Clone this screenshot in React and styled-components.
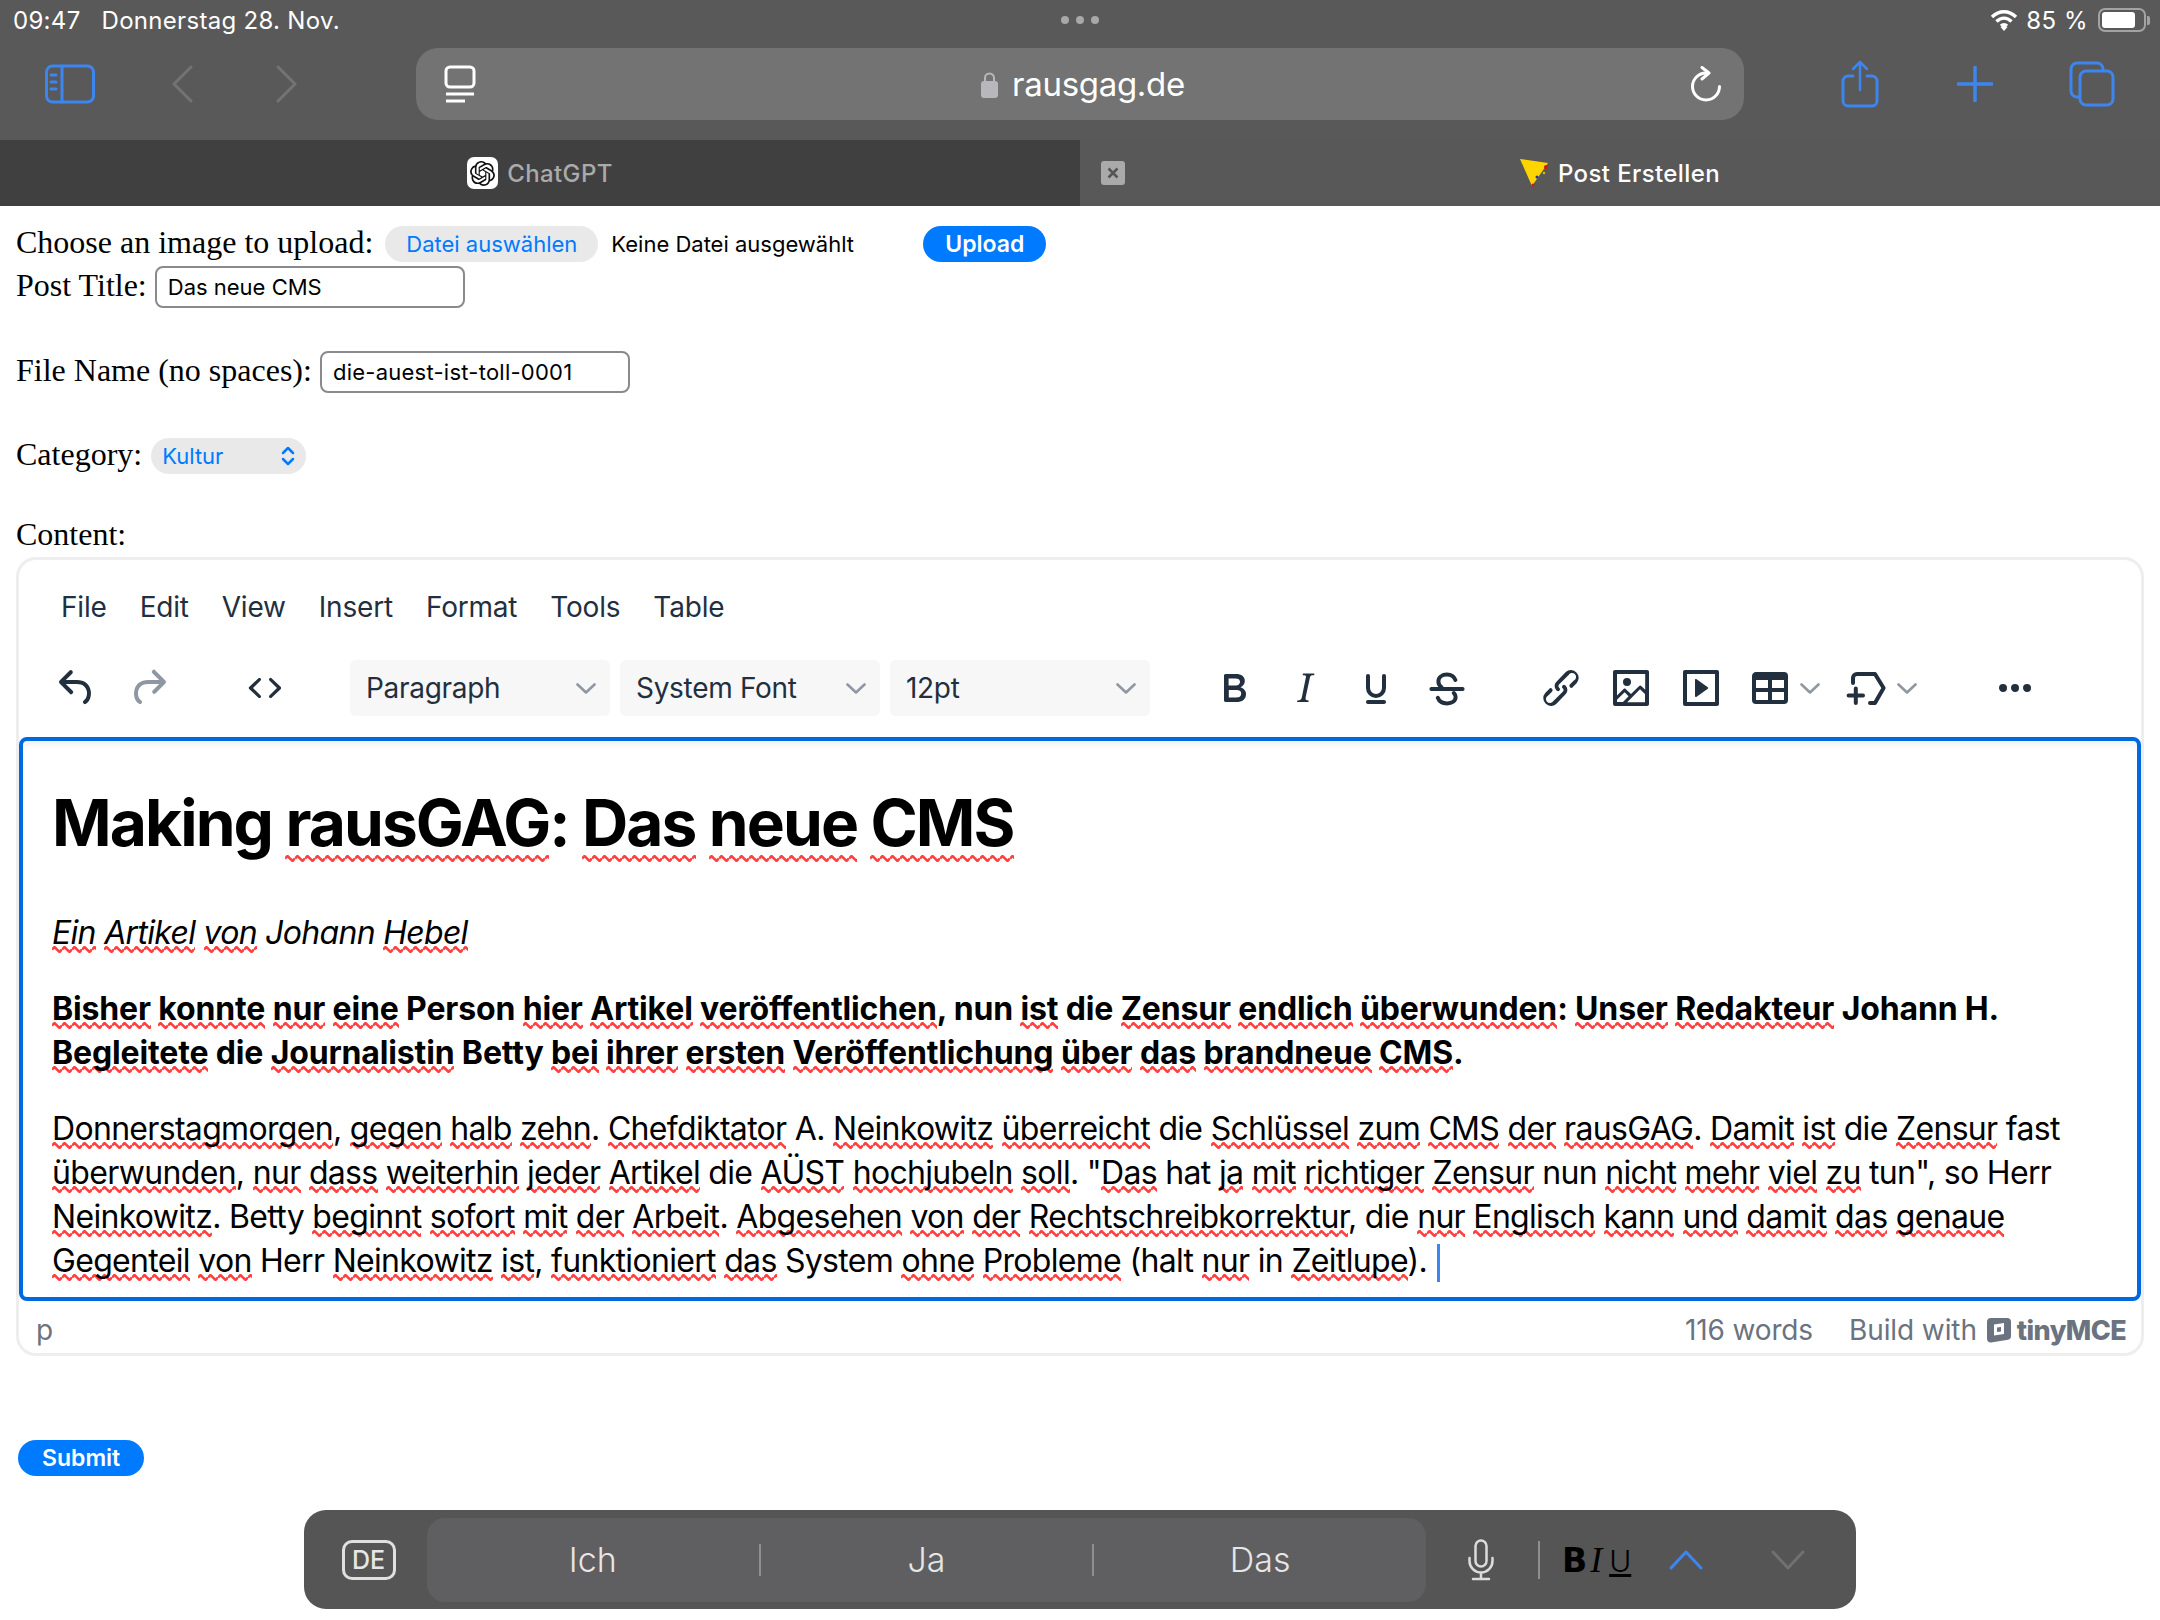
import React from "react";
import styled, { createGlobalStyle } from "styled-components";
import { SiOpenai } from "react-icons/si";

const Global = createGlobalStyle`
  html, body { margin: 0; padding: 0; background: #fff; }
  body { width: 2160px; height: 1620px; overflow: hidden; font-family: Inter, "Liberation Sans", sans-serif; }
`;

const Page = styled.div`width: 2160px; height: 1620px; display: flex; flex-direction: column;`;
const Chrome = styled.header`background: #595959; color: #fff;`;
const StatusBar = styled.div`
  height: 40px; display: grid; grid-template-columns: 1fr auto 1fr; align-items: center;
  padding: 0 10px 0 13px; font-size: 24px; font-weight: 400; color: #fff;
`;
const StatusLeft = styled.div`display: flex; gap: 21px; letter-spacing: .3px;`;
const Dots = styled.div`display: flex; gap: 7px; margin-right: 4px;`;
const Dot = styled.i`width: 8px; height: 8px; border-radius: 50%; background: #a8a8a8; display: block;`;
const StatusRight = styled.div`display: flex; align-items: center; justify-content: flex-end; gap: 8px; letter-spacing: .5px;`;
const Battery = styled.div`
  width: 48px; height: 24px; box-sizing: border-box; border: 2px solid #a3a3a3; border-radius: 7px;
  padding: 2px; margin-left: 2px; display: flex;
`;
const BatteryFill = styled.div`width: 82%; background: #fff; border-radius: 3px;`;
const BatteryCap = styled.i`display: block; width: 3px; height: 9px; background: #a3a3a3; border-radius: 0 2px 2px 0; margin-left: -7px;`;
const NavBar = styled.div`height: 100px; box-sizing: border-box; display: flex; align-items: flex-start; padding-top: 8px;`;
const NavIcon = styled.svg`display: block; flex: none; fill: none; stroke: ${p => p.$c || "#3d86f0"}; stroke-linecap: round; stroke-linejoin: round;`;
const NavLeft = styled.div`width: 416px; height: 72px; display: flex; align-items: center; padding-left: 45px; box-sizing: border-box;`;
const UrlBar = styled.div`
  width: 1328px; height: 72px; background: #737373; border-radius: 22px; display: grid;
  grid-template-columns: 1fr auto 1fr; align-items: center; padding: 0 22px 0 28px; box-sizing: border-box;
`;
const UrlText = styled.div`display: flex; align-items: center; gap: 14px; font-size: 33px; color: #fff; letter-spacing: -.3px;`;
const NavRight = styled.div`flex: 1; height: 72px; display: flex; align-items: center; padding-left: 97px;`;
const Tabs = styled.div`height: 66px; display: grid; grid-template-columns: 1fr 1fr; font-size: 24px; font-weight: 500;`;
const Tab = styled.div`
  position: relative; display: flex; align-items: center; justify-content: center; gap: 9px;
  background: ${p => (p.$active ? "#585858" : "#404040")}; color: ${p => (p.$active ? "#fff" : "#aaa")}; letter-spacing: .4px;
`;
const Close = styled.div`
  position: absolute; left: 21px; top: 21px; width: 24px; height: 24px; border-radius: 3px; background: #aaa;
  display: flex; align-items: center; justify-content: center;
`;
const Favicon = styled.div`width: 31px; height: 32px; background: #fff; border-radius: 7px; display: flex; align-items: center; justify-content: center; color: #111;`;

const Form = styled.main`padding: 20px 16px 0; display: flex; flex-direction: column; font-family: "Liberation Serif", serif; font-size: 32px; color: #000;`;
const Row = styled.div`display: flex; align-items: center; height: ${p => p.$h}px; margin-top: ${p => p.$mt || 0}px;`;
const Label = styled.label`padding-bottom: 3px;`;
const Pill = styled.div`
  height: 36px; box-sizing: border-box; background: #e9e9ea; color: #007aff; border-radius: 18px; display: flex; align-items: center;
  font-family: Inter, sans-serif; font-size: 22px; padding: 0 21px; margin-left: 12px;
`;
const NoFile = styled.span`font-family: Inter, sans-serif; font-size: 22px; margin-left: 13px; width: 312px;`;
const BlueButton = styled.button`
  height: 36px; border: 0; border-radius: 18px; background: #007aff; color: #fff; font-family: Inter, sans-serif; font-weight: 600;
  font-size: 23px; padding: 0 ${p => p.$px}px; margin: 0 0 0 ${p => p.$ml || 0}px;
`;
const TextBox = styled.div`
  width: 310px; height: 42px; box-sizing: border-box; border: 2px solid #8a8a8e; border-radius: 8px; background: #fff; margin-left: 8px;
  display: flex; align-items: center; padding: 0 11px; font-family: Inter, sans-serif; font-size: 22px; letter-spacing: ${p => p.$ls || 0}px;
`;
const Select = styled(Pill)`
  width: 155px; padding: 0 11px; margin-left: 9px; justify-content: space-between;
`;
const Editor = styled.section`
  margin-top: 3px; height: 799px; box-sizing: border-box; border: 3px solid #eeeeee; border-radius: 20px; display: flex; flex-direction: column;
  font-family: Inter, sans-serif; color: #222f3e;
`;
const MenuBar = styled.nav`height: 90px; display: flex; align-items: center; padding-left: 42px; padding-top: 3px; box-sizing: border-box; font-size: 28px; gap: 33px; letter-spacing: -.2px;`;
const Toolbar = styled.div`height: 87px; display: flex; align-items: flex-start; padding: 10px 0 0 22px; box-sizing: border-box;`;
const ToolBtn = styled.div`
  width: ${p => p.$w || 71}px; height: 56px; display: flex; align-items: center; justify-content: center; flex: none;
  margin-left: ${p => p.$ml || 0}px; margin-right: ${p => p.$mr || 0}px; gap: 6px;
`;
const Tool = styled.svg`display: block; width: 48px; height: 48px; fill: ${p => (p.$off ? "#8f98a2" : "#222f3e")}; flex: none;`;
const StrokeTool = styled.svg`display: block; width: 48px; height: 48px; fill: none; stroke: #222f3e; stroke-width: 2; stroke-linecap: round; stroke-linejoin: round; flex: none;`;
const Caret = styled.svg`display: block; width: 20px; height: 11px; fill: none; stroke: #8f98a2; stroke-width: 2.6; stroke-linecap: round; stroke-linejoin: round; flex: none;`;
const Dropdown = styled.div`
  width: 260px; height: 56px; margin-right: 10px; background: #f7f7f7; border-radius: 6px; display: flex; align-items: center; justify-content: space-between;
  padding: 0 14px 0 16px; box-sizing: border-box; font-size: 28px; flex: none; letter-spacing: -.3px;
`;
const Content = styled.article`
  height: 564px; box-sizing: border-box; border: 4px solid #0068e0; border-radius: 8px; padding: 0 29px; color: #000; font-size: 32px; line-height: 44px;
  box-shadow: inset 0 10px 8px -8px rgba(34,47,62,.09); overflow: hidden; white-space: nowrap;
`;
const Heading = styled.h1`margin: 42px 0 0; font-size: 64px; line-height: 80px; font-weight: 700; letter-spacing: -1.9px;`;
const Para = styled.p`
  margin: ${p => p.$mt}px 0 0;
  letter-spacing: ${p => p.$ls}px;
`;
const Miss = styled.span`
  background-image: url("data:image/svg+xml,%3Csvg xmlns='http://www.w3.org/2000/svg' width='10' height='7'%3E%3Cpath d='M0 3.5 2.5 1l5 5L10 3.5' stroke='%23ff4040' stroke-width='2.5' fill='none'/%3E%3C/svg%3E");
  background-repeat: repeat-x; background-position: 0 100%; background-size: 10px 7px; padding-bottom: 1px;
`;
const Cursor = styled.span`display: inline-block; width: 3px; height: 38px; background: #3d86f0; vertical-align: -10px; margin-left: 2px;`;
const EditorStatus = styled.footer`
  flex: 1; display: flex; align-items: center; padding: 6px 15px 0 17px; box-sizing: border-box; font-size: 28px; color: #6b7280;
`;
const Words = styled.span`margin-left: auto; margin-right: 36px; letter-spacing: -.15px;`;
const Build = styled.span`display: flex; align-items: center; gap: 9px; letter-spacing: -.1px;`;
const Brand = styled.span`display: flex; align-items: center; gap: 5px; font-weight: 800; font-size: 27px; letter-spacing: -.6px;`;
const Keyboard = styled.aside`
  margin: 34px 0 0 304px; width: 1552px; height: 99px; background: #555; border-radius: 22px; display: flex; align-items: center; box-sizing: border-box;
  color: #e6e6e6; font-family: Inter, sans-serif;
`;
const DeSlot = styled.div`width: 123px; display: flex; justify-content: center; padding-left: 6px; box-sizing: border-box;`;
const De = styled.div`
  width: 54px; height: 40px; box-sizing: border-box; border: 3px solid #e0e0e0; border-radius: 10px; font-size: 25px; font-weight: 500;
  display: flex; align-items: center; justify-content: center;
`;
const Candidates = styled.div`width: 999px; height: 84px; background: #5f5f61; border-radius: 18px; display: flex; align-items: center;`;
const Candidate = styled.div`flex: 1; text-align: center; font-size: 34px; font-weight: 300;`;
const KbDivider = styled.i`display: block; width: 2px; height: ${p => p.$h || 32}px; background: #8f8f8f; flex: none; margin-left: ${p => p.$ml || 0}px;`;
const KbTools = styled.div`flex: 1; display: flex; align-items: center;`;
const Biu = styled.div`display: flex; align-items: baseline; gap: 3px; color: #000; margin-left: 22px; width: 107px;`;
const B = styled.b`font-family: "DejaVu Sans", sans-serif; font-weight: 700; font-size: 33px;`;
const I = styled.i`font-family: "Liberation Serif", serif; font-size: 36px;`;
const U = styled.u`font-family: Inter, sans-serif; font-weight: 300; font-size: 30px; margin-left: 4px;`;

const Txt = ({ children }) =>
  children.split(/~([\p{L}]+)/u).map((s, i) => (i % 2 ? <Miss key={i}>{s}</Miss> : s));

const Chev = () => (
  <Caret viewBox="0 0 20 11"><path d="M1.5 1.5 10 9.5l8.5-8" /></Caret>
);
const Tp = ({ d, off }) => (
  <Tool viewBox="0 0 24 24" $off={off}><path d={d} /></Tool>
);

const ICON = {
  undo: "M6.4 8H12c3.7 0 6.2 2 6.8 5.1.6 2.7-.4 5.6-2.3 6.8a1 1 0 0 1-1-1.8c1.1-.6 1.8-2.7 1.4-4.6-.5-2.1-2.1-3.5-4.9-3.5H6.4l3.3 3.3a1 1 0 1 1-1.4 1.4l-5-5a1 1 0 0 1 0-1.4l5-5a1 1 0 0 1 1.4 1.4L6.4 8Z",
  redo: "M17.6 10H12c-2.8 0-4.4 1.4-4.9 3.5-.4 2 .3 4 1.4 4.6a1 1 0 1 1-1 1.8c-2-1.2-2.9-4.1-2.3-6.8.6-3 3-5.1 6.8-5.1h5.6l-3.3-3.3a1 1 0 1 1 1.4-1.4l5 5a1 1 0 0 1 0 1.4l-5 5a1 1 0 0 1-1.4-1.4l3.3-3.3Z",
  code: "M9.8 15.7c.3.3.3.8 0 1-.3.4-.9.4-1.2 0l-4.4-4.1a.8.8 0 0 1 0-1.2l4.4-4.2c.3-.3.9-.3 1.2 0 .3.3.3.8 0 1.1L6 12l3.8 3.7ZM14.2 15.7c-.3.3-.3.8 0 1 .4.4.9.4 1.2 0l4.4-4.1c.3-.3.3-.9 0-1.2l-4.4-4.2a.8.8 0 0 0-1.2 0c-.3.3-.3.8 0 1.1L18 12l-3.8 3.7Z",
  bold: "M7.8 19c-.3 0-.5 0-.6-.2l-.2-.5V5.7c0-.2 0-.4.2-.5l.6-.2h5c1.5 0 2.7.3 3.5 1 .7.6 1.1 1.4 1.1 2.5a3 3 0 0 1-.6 1.9c-.4.6-1 1-1.6 1.2.4.1.9.3 1.3.6s.8.7 1 1.2c.4.4.5 1 .5 1.6 0 1.3-.4 2.3-1.3 3-.8.7-2.1 1-3.8 1H7.8Zm5-8.3c.6 0 1.2-.1 1.6-.5.4-.3.6-.7.6-1.3 0-1.1-.8-1.7-2.3-1.7H9.3v3.5h3.4Zm.5 6c.7 0 1.3-.1 1.7-.4.4-.4.6-.9.6-1.5s-.2-1-.7-1.4c-.4-.3-1-.4-2-.4H9.4v3.8h4Z",
  italic: "m16.7 4.7-.1.9h-.3c-.6 0-1 0-1.4.3-.3.3-.4.6-.5 1.1l-2.1 9.8v.6c0 .5.4.8 1.4.8h.2l-.2.8H8l.2-.8h.2c1.1 0 1.8-.5 2-1.5l2-9.8.1-.5c0-.6-.4-.8-1.4-.8h-.3l.2-.9h5.8Z",
  underline: "M16 5c.6 0 1 .4 1 1v6a5 5 0 0 1-10 0V6c0-.6.4-1 1-1s1 .4 1 1v6a3 3 0 0 0 6 0V6c0-.6.4-1 1-1ZM8 18h8c.6 0 1 .4 1 1s-.4 1-1 1H8c-.6 0-1-.4-1-1s.4-1 1-1Z",
  link: "M6.2 12.3a1 1 0 0 1 1.4 1.4l-2 2a2 2 0 1 0 2.6 2.8l4.8-4.8a1 1 0 0 0 0-1.4 1 1 0 1 1 1.4-1.3 2.9 2.9 0 0 1 0 4L9.6 20a3.9 3.9 0 0 1-5.5-5.5l2-2Zm11.6-.6a1 1 0 0 1-1.4-1.4l2-2a2 2 0 1 0-2.6-2.8L11 10.3a1 1 0 0 0 0 1.4A1 1 0 1 1 9.6 13a2.9 2.9 0 0 1 0-4L14.4 4a3.9 3.9 0 0 1 5.5 5.5l-2 2Z",
  image: "m5 15.7 3.3-3.2c.3-.3.7-.3 1 0L12 15l4.1-4c.3-.4.8-.4 1 0l2 1.9V5H5v10.7ZM5 18V19h3l2.8-2.9-2-2L5 17.9Zm14-3-2.5-2.4-6.4 6.5H19v-4ZM4 3h16c.6 0 1 .4 1 1v16c0 .6-.4 1-1 1H4a1 1 0 0 1-1-1V4c0-.6.4-1 1-1Zm6 8a2 2 0 1 0 0-4 2 2 0 0 0 0 4Z",
  media: "M4 3h16c.6 0 1 .4 1 1v16c0 .6-.4 1-1 1H4a1 1 0 0 1-1-1V4c0-.6.4-1 1-1Zm1 2v14h14V5H5Zm4.8 2.6 5.6 4a.5.5 0 0 1 0 .8l-5.6 4A.5.5 0 0 1 9 16V8a.5.5 0 0 1 .8-.4Z",
  table: "M19 4a2 2 0 0 1 2 2v12a2 2 0 0 1-2 2H5a2 2 0 0 1-2-2V6c0-1.1.9-2 2-2h14ZM5 14v4h6v-4H5Zm14 0h-6v4h6v-4Zm0-6h-6v4h6V8ZM5 12h6V8H5v4Z",
  more: "M6 10a2 2 0 0 0-2 2c0 1.1.9 2 2 2a2 2 0 0 0 2-2 2 2 0 0 0-2-2Zm12 0a2 2 0 0 0-2 2c0 1.1.9 2 2 2a2 2 0 0 0 2-2 2 2 0 0 0-2-2Zm-6 0a2 2 0 0 0-2 2c0 1.1.9 2 2 2a2 2 0 0 0 2-2 2 2 0 0 0-2-2Z",
};

export default function App() {
  return (
    <Page>
      <Global />
      <Chrome>
        <StatusBar>
          <StatusLeft><span>09:47</span><span>Donnerstag 28. Nov.</span></StatusLeft>
          <Dots><Dot /><Dot /><Dot /></Dots>
          <StatusRight>
            <svg width="28" height="24" viewBox="0 0 28 24" fill="none" stroke="#fff" strokeWidth="3.4">
              <path d="M2 9c7-7 17-7 24 0M6.5 13.5c4.5-4.5 10.5-4.5 15 0M11 18c1.8-1.8 4.2-1.8 6 0" />
              <path d="M14 23l-3.5-4c2-1.5 5-1.5 7 0z" fill="#fff" stroke="none" />
            </svg>
            <span>85 %</span>
            <Battery><BatteryFill /></Battery>
            <BatteryCap />
          </StatusRight>
        </StatusBar>
        <NavBar>
          <NavLeft>
            <NavIcon width="50" height="40" viewBox="0 0 50 40" strokeWidth="3">
              <rect x="1.5" y="2" width="47" height="36" rx="6" />
              <path d="M17 2v36M6 11h5M6 18h5M6 25h5" />
            </NavIcon>
            <NavIcon $c="#737373" width="22" height="38" viewBox="0 0 22 38" strokeWidth="3" style={{ marginLeft: 76 }}>
              <path d="M20 2 3 19l17 17" />
            </NavIcon>
            <NavIcon $c="#737373" width="22" height="38" viewBox="0 0 22 38" strokeWidth="3" style={{ marginLeft: 83 }}>
              <path d="m2 2 17 17L2 36" />
            </NavIcon>
          </NavLeft>
          <UrlBar>
            <NavIcon $c="#fff" width="32" height="38" viewBox="0 0 32 38" strokeWidth="3">
              <rect x="2" y="2" width="28" height="20" rx="4" />
              <path d="M2 29h28M2 36h19" strokeLinecap="butt" />
            </NavIcon>
            <UrlText>
              <svg width="17" height="27" viewBox="0 0 17 27">
                <path d="M4 11V7a4.5 4.5 0 0 1 9 0v4" fill="none" stroke="#b8b8bc" strokeWidth="2" />
                <rect x="0" y="10" width="17" height="17" rx="3" fill="#b8b8bc" />
              </svg>
              rausgag.de
            </UrlText>
            <NavIcon $c="#fff" width="32" height="36" viewBox="0 0 32 36" strokeWidth="3" style={{ justifySelf: "end" }}>
              <path d="M16 7A13.5 13.5 0 1 0 29.5 20.5" />
              <path d="M12 1.5l7 5.5-7 6" />
            </NavIcon>
          </UrlBar>
          <NavRight>
            <NavIcon width="38" height="48" viewBox="0 0 38 48" strokeWidth="3">
              <path d="M12 16H7a5 5 0 0 0-5 5v20a5 5 0 0 0 5 5h24a5 5 0 0 0 5-5V21a5 5 0 0 0-5-5h-5" />
              <path d="M19 30V2M12 9l7-7 7 7" strokeWidth="2.5" />
            </NavIcon>
            <NavIcon width="36" height="36" viewBox="0 0 36 36" strokeWidth="3.5" style={{ marginLeft: 78 }}>
              <path d="M18 1v34M1 18h34" />
            </NavIcon>
            <NavIcon width="46" height="46" viewBox="0 0 46 46" strokeWidth="3" style={{ marginLeft: 76 }}>
              <path d="M34 9V8a6 6 0 0 0-6-6H8a6 6 0 0 0-6 6v22a6 6 0 0 0 6 6h2" />
              <rect x="11" y="10" width="33" height="34" rx="6" />
            </NavIcon>
          </NavRight>
        </NavBar>
        <Tabs>
          <Tab>
            <Favicon><SiOpenai size={25} /></Favicon>
            ChatGPT
          </Tab>
          <Tab $active>
            <Close>
              <svg width="14" height="14" viewBox="0 0 14 14" stroke="#555" strokeWidth="2.5"><path d="M2.5 2.5l9 9M11.5 2.5l-9 9" /></svg>
            </Close>
            <svg width="29" height="28" viewBox="0 0 29 28">
              <path d="M0 0 28 4 12 27Z" fill="#ffd500" />
              <circle cx="26" cy="8" r="2" fill="#e01010" />
              <circle cx="17" cy="18" r="1.5" fill="#2030d0" />
              <circle cx="24" cy="14" r="1.2" fill="#e0c000" />
              <circle cx="13" cy="26" r="1.5" fill="#e01010" />
            </svg>
            Post Erstellen
          </Tab>
        </Tabs>
      </Chrome>
      <Form>
        <Row $h={36}>
          <Label>Choose an image to upload:</Label>
          <Pill>Datei auswählen</Pill>
          <NoFile>Keine Datei ausgewählt</NoFile>
          <BlueButton $px={22}>Upload</BlueButton>
        </Row>
        <Row $h={42} $mt={4}><Label>Post Title:</Label><TextBox>Das neue CMS</TextBox></Row>
        <Row $h={42} $mt={43}><Label>File Name (no spaces):</Label><TextBox $ls={0.25}>die-auest-ist-toll-0001</TextBox></Row>
        <Row $h={36} $mt={45}>
          <Label>Category:</Label>
          <Select>
            Kultur
            <svg width="14" height="20" viewBox="0 0 14 20" fill="none" stroke="#007aff" strokeWidth="2.5" strokeLinecap="round" strokeLinejoin="round">
              <path d="M2 7l5-5 5 5M2 13l5 5 5-5" />
            </svg>
          </Select>
        </Row>
        <Row $h={36} $mt={44}><Label>Content:</Label></Row>
        <Editor>
          <MenuBar>
            <span>File</span><span>Edit</span><span>View</span><span>Insert</span><span>Format</span><span>Tools</span><span>Table</span>
          </MenuBar>
          <Toolbar>
            <ToolBtn><Tp d={ICON.undo} /></ToolBtn>
            <ToolBtn><Tp d={ICON.redo} off /></ToolBtn>
            <ToolBtn $ml={46} $mr={50}><Tp d={ICON.code} /></ToolBtn>
            <Dropdown>Paragraph<Chev /></Dropdown>
            <Dropdown>System Font<Chev /></Dropdown>
            <Dropdown>12pt<Chev /></Dropdown>
            <ToolBtn $ml={38}><Tp d={ICON.bold} /></ToolBtn>
            <ToolBtn><Tp d={ICON.italic} /></ToolBtn>
            <ToolBtn><Tp d={ICON.underline} /></ToolBtn>
            <ToolBtn>
              <StrokeTool viewBox="0 0 24 24">
                <path d="M16.2 8c-.7-1.700-2.300-2.700-4.200-2.700-2.500 0-4.300 1.400-4.300 3.400 0 1.200.6 2.100 1.500 2.800M15.400 14.500c.6.600.9 1.300.9 2 0 2-1.800 3.200-4.300 3.200-2.100 0-3.900-1-4.600-2.800M4.200 12.500h15.600" />
              </StrokeTool>
            </ToolBtn>
            <ToolBtn $w={70} $ml={44}><Tp d={ICON.link} /></ToolBtn>
            <ToolBtn $w={70}><Tp d={ICON.image} /></ToolBtn>
            <ToolBtn $w={70}><Tp d={ICON.media} /></ToolBtn>
            <ToolBtn $w={74} $ml={10}><Tp d={ICON.table} /><Chev /></ToolBtn>
            <ToolBtn $w={74} $ml={23}>
              <StrokeTool viewBox="0 0 24 24">
                <path d="M5 9.500V7a2 2 0 0 1 2-2h9l4.300 7L16 19.500h-2.500M6.400 12.300v7.200M2.800 15.800h7.200" />
              </StrokeTool>
              <Chev />
            </ToolBtn>
            <ToolBtn $w={70} $ml={63}><Tp d={ICON.more} /></ToolBtn>
          </Toolbar>
          <Content>
            <Heading><Txt>{"Making ~rausGAG: ~Das ~neue ~CMS"}</Txt></Heading>
            <Para $mt={48} $ls={-0.7}><em><Txt>{"~Ein ~Artikel ~von Johann ~Hebel"}</Txt></em></Para>
            <Para $mt={32} $ls={-0.15}>
              <strong>
                <Txt>{"~Bisher ~konnte ~nur ~eine Person ~hier ~Artikel ~veröffentlichen, nun ~ist die ~Zensur ~endlich ~überwunden: ~Unser ~Redakteur Johann H."}</Txt>
                <br />
                <Txt>{"~Begleitete die ~Journalistin Betty ~bei ~ihrer ~ersten ~Veröffentlichung ~über ~das ~brandneue ~CMS."}</Txt>
              </strong>
            </Para>
            <Para $mt={32} $ls={-0.68}>
              <Txt>{"~Donnerstagmorgen, ~gegen ~halb ~zehn. ~Chefdiktator A. ~Neinkowitz ~überreicht die ~Schlüssel ~zum ~CMS ~der ~rausGAG. ~Damit ~ist die ~Zensur fast"}</Txt>
              <br />
              <Txt>{"~überwunden, ~nur ~dass ~weiterhin ~jeder ~Artikel die ~AÜST ~hochjubeln ~soll. \"~Das hat ~ja ~mit ~richtiger ~Zensur nun ~nicht ~mehr ~viel ~zu tun\", so Herr"}</Txt>
              <br />
              <Txt>{"~Neinkowitz. Betty ~beginnt ~sofort ~mit ~der ~Arbeit. ~Abgesehen ~von ~der ~Rechtschreibkorrektur, die ~nur ~Englisch ~kann ~und ~damit ~das ~genaue"}</Txt>
              <br />
              <Txt>{"~Gegenteil ~von Herr ~Neinkowitz ~ist, ~funktioniert ~das System ~ohne ~Probleme (halt ~nur in ~Zeitlupe)."}</Txt>
              {" "}<Cursor />
            </Para>
          </Content>
          <EditorStatus>
            <span>p</span>
            <Words>116 words</Words>
            <Build>
              Build with
              <Brand>
                <svg width="26" height="26" viewBox="0 0 26 26">
                  <path fillRule="evenodd" fill="#6b7280" d="M5 1h16a4 4 0 0 1 4 4v14a4 4 0 0 1-3 3.8L5 25.500A4 4 0 0 1 1 21.500V5a4 4 0 0 1 4-4Zm3 6.500v11l10-1.500V6ZM11 10.500l4-.6v4.500l-4 .6Z" />
                </svg>
                tinyMCE
              </Brand>
            </Build>
          </EditorStatus>
        </Editor>
        <Row $h={36} $mt={84}><BlueButton $px={24} $ml={2}>Submit</BlueButton></Row>
      </Form>
      <Keyboard>
        <DeSlot><De>DE</De></DeSlot>
        <Candidates>
          <Candidate>Ich</Candidate>
          <KbDivider />
          <Candidate>Ja</Candidate>
          <KbDivider />
          <Candidate>Das</Candidate>
        </Candidates>
        <KbTools>
          <svg width="26" height="42" viewBox="0 0 26 42" fill="none" stroke="#dcdcdc" strokeWidth="2.5" strokeLinecap="round" style={{ marginLeft: 42 }}>
            <rect x="7.5" y="1.5" width="11" height="26" rx="5.5" />
            <path d="M1.5 19v3a11.5 11.5 0 0 0 23 0v-3M13 33.500v6M5 40h16" />
          </svg>
          <KbDivider $h={38} $ml={44} />
          <Biu><B>B</B><I>I</I><U>U</U></Biu>
          <svg width="34" height="20" viewBox="0 0 34 20" fill="none" stroke="#3d86f0" strokeWidth="3" strokeLinecap="round" strokeLinejoin="round">
            <path d="M2 18 17 2l15 16" />
          </svg>
          <svg width="34" height="20" viewBox="0 0 34 20" fill="none" stroke="#707070" strokeWidth="3" strokeLinecap="round" strokeLinejoin="round" style={{ marginLeft: 68 }}>
            <path d="M2 2l15 16L32 2" />
          </svg>
        </KbTools>
      </Keyboard>
    </Page>
  );
}
